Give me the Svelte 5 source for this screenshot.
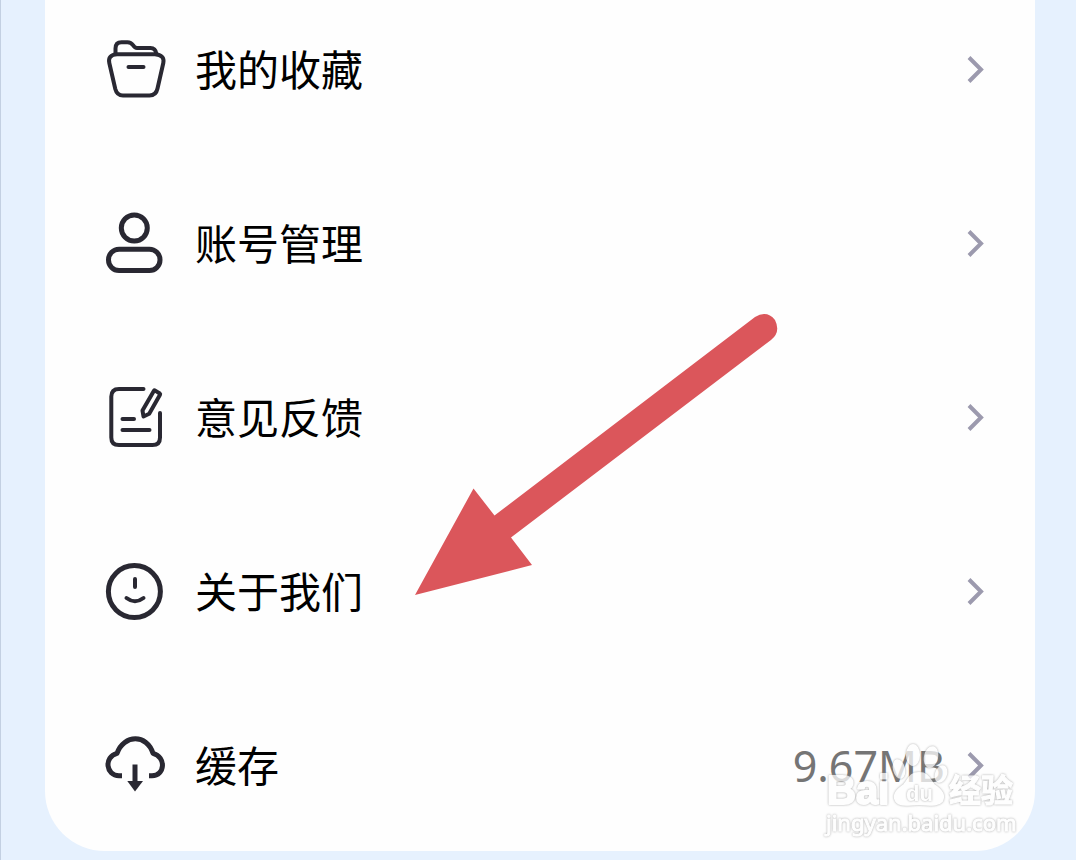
<script>
  const items = [
    { icon: 'folder', label: '我的收藏' },
    { icon: 'user', label: '账号管理' },
    { icon: 'feedback', label: '意见反馈' },
    { icon: 'smile', label: '关于我们' },
    { icon: 'cloud', label: '缓存', value: '9.67MB' }
  ];
</script>

<main>
  <nav class="card">
    {#each items as item}
      <button class="row" type="button">
        <svg class="icon" viewBox="0 0 60 60" aria-hidden="true">
          {#if item.icon === 'folder'}
            <path d="M10.5 14V8.5Q10.500 2.200 16.500 2.200H22.500Q26 2.200 28 5.200Q29.800 8 32 8H45.500Q50.500 8 51.500 14" />
            <path d="M12 14.300H50Q60 15 58.300 23L52.500 48.500Q51 55.500 44.500 55.500H18Q12 55.500 10.300 49L4.300 23Q2.500 15 12 14.300Z" />
            <path d="M23.500 27H38.500" />
          {:else if item.icon === 'user'}
            <circle cx="29.3" cy="14" r="13" />
            <rect x="3.5" y="35.200" width="51.500" height="21.300" rx="10.600" />
          {:else if item.icon === 'feedback'}
            <path d="M38.500 .9H14Q6.300 .9 6.300 8.600V49.400Q6.300 57 14 57H47.500Q55 57 55 49.400V25" />
            <path d="M50.200 2.600L54.800 5.500Q55.400 6 55 6.700L44.200 25.800L38.500 28.500L37.500 22.600L48.800 2.900Q49.400 2.100 50.200 2.600Z" />
            <path d="M17.500 31H29M17.500 42H44.500" />
          {:else if item.icon === 'smile'}
            <circle cx="29.400" cy="29.600" r="26" />
            <path d="M30 17V25M21.500 36Q30 42.500 38.500 36" />
          {:else}
            <path class="butt" d="M17 39.700H14C1 39.700-1.500 21 12 17.300C19-2 42-2 48 17.300C61.500 21 60 39.700 47 39.700H44" />
            <path class="butt" d="M30 28.500V46" />
            <path class="solid" d="M22.300 45H38L30 55.500Z" />
          {/if}
        </svg>
        <span class="label">{item.label}</span>
        {#if item.value}<span class="value">{item.value}</span>{/if}
        <svg class="chevron" viewBox="0 0 20 30" aria-hidden="true"><path d="M4 2.500L16 14.500L4 26.500" /></svg>
      </button>
    {/each}
    <svg class="pointer" viewBox="0 0 364 282" aria-hidden="true">
      <path d="M0 281L58.500 174.500L79.500 201.500L340 3Q352-4 360 6Q366 18 356 26L96 223.500L117 251Z" />
    </svg>
    <svg class="watermark" viewBox="0 0 200 100" aria-hidden="true">
      <g class="outlined">
        <ellipse cx="93" cy="15" rx="6" ry="10" />
        <ellipse cx="111" cy="17" rx="6" ry="10" transform="rotate(12 111 17)" />
        <ellipse cx="79" cy="29" rx="5" ry="9" transform="rotate(-14 79 29)" />
        <ellipse cx="121" cy="34" rx="5" ry="8" transform="rotate(20 121 34)" />
      </g>
      <g class="outlined">
        <path d="M99 33C89 33 89 40 84 45C75 51 73 56 76 61C80 67 90 64 99 64C108 64 117 67 122 61C125 55 122 50 114 45C109 40 109 33 99 33Z" />
        <text class="brand" x="7" y="64">Bai</text>
        <text class="cn" x="129" y="62">经验</text>
        <text class="url" x="6" y="91">jingyan.baidu.com</text>
      </g>
      <text class="du" x="86" y="61">du</text>
    </svg>
  </nav>
</main>

<style>
  :global(body) { margin: 0; background: #e6f1fe; }
  main {
    min-height: 100vh;
    box-sizing: border-box;
    padding: 0 41px 9px 44px;
    border-left: 1px solid #c3d0e2;
    font-family: "Noto Sans", "Noto Sans CJK SC", sans-serif;
  }
  .card {
    position: relative;
    display: flex;
    flex-direction: column;
    gap: 114px;
    padding: 40px 50px 55px 60px;
    background: #fefefe;
    border-radius: 0 0 60px 60px;
  }
  .row {
    display: flex;
    align-items: center;
    height: 60px;
    padding: 0;
    border: 0;
    background: none;
    font: inherit;
    font-size: 42px;
    line-height: 60px;
    color: #000;
    text-align: left;
    cursor: pointer;
  }
  .icon {
    width: 60px;
    height: 60px;
    margin-right: 30px;
    overflow: visible;
    fill: none;
    stroke: #292832;
    stroke-width: 4;
    stroke-linecap: round;
    stroke-linejoin: round;
  }
  .icon circle, .icon rect { stroke-width: 5; }
  .icon .butt { stroke-width: 5; stroke-linecap: butt; }
  .icon .solid { fill: #292832; stroke: none; }
  .label {
    flex: 1;
    padding-bottom: 4px;
    font-family: "Noto Sans CJK SC", sans-serif;
  }
  .value { color: #757575; margin-right: 20px; font-size: 43px; }
  .chevron {
    width: 20px;
    height: 30px;
    fill: none;
    stroke: #9c9aae;
    stroke-width: 4;
  }
  .pointer {
    position: absolute;
    left: 370px;
    top: 314px;
    width: 364px;
    height: 282px;
    fill: #db565b;
    pointer-events: none;
  }
  .watermark {
    position: absolute;
    right: 15px;
    bottom: 11px;
    width: 200px;
    height: 100px;
    opacity: .75;
    pointer-events: none;
  }
  .outlined {
    fill: #fff;
    stroke: #fff;
    stroke-width: 2;
    stroke-linejoin: round;
    filter: drop-shadow(0 0 1px #909090);
  }
  .brand { font: bold 40px "Liberation Sans", sans-serif; }
  .cn { font: bold 32px "Noto Sans CJK SC", sans-serif; stroke-width: 1; }
  .url { font: 22px "Noto Sans", sans-serif; stroke-width: 1; }
  .du {
    font: bold 22px "Liberation Sans", sans-serif;
    fill: #fff;
    filter: drop-shadow(0 0 1px #909090);
  }
</style>
